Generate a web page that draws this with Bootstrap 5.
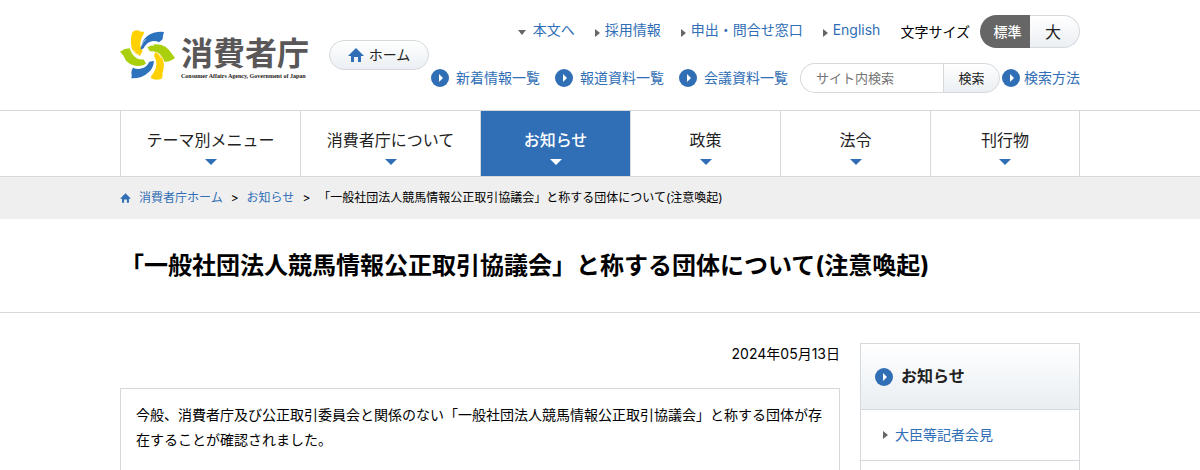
<!DOCTYPE html>
<html lang="ja">
<head>
  <meta charset="UTF-8">
  <meta name="viewport" content="width=device-width, initial-scale=1.0">
  <title>「一般社団法人競馬情報公正取引協議会」と称する団体について(注意喚起) | 消費者庁</title>
  <link rel="stylesheet" href="https://cdn.jsdelivr.net/npm/bootstrap@5.3.0/dist/css/bootstrap.min.css">
  <style>
    body {
      font-family: Inter, "Noto Sans CJK JP", sans-serif;
      font-size: 14px;
      line-height: 20px;
      color: #000;
    }

    a {
      color: #306eb5;
      text-decoration: none;
    }

    .site-width {
      width: 100%;
      max-width: 960px;
      margin: 0 auto;
    }

    /* header */
    .header-inner {
      min-height: 110px;
      padding: 15px 0;
    }

    .logo-link {
      gap: 6px;
      margin-top: 15px;
    }

    .logo-text {
      padding-top: 6px;
    }

    .logo-name {
      font-size: 32px;
      line-height: 36px;
      font-weight: 700;
      color: #595757;
    }

    .logo-en {
      font-family: "Liberation Serif", serif;
      font-size: 6px;
      line-height: 8px;
      font-weight: 700;
      color: #231815;
      white-space: nowrap;
    }

    .home-link {
      width: 100px;
      height: 30px;
      margin: 25px 0 0 20px;
      gap: 5px;
    }

    .pill {
      color: #222;
      border: 1px solid #d5d9dd;
      border-radius: 18px;
      background: linear-gradient(#fff, #ebeff3);
    }

    .header-tools {
      gap: 15px;
    }

    .tool-links {
      gap: 20px;
      padding: 0 20px 4px 0;
    }

    .size-label {
      margin-right: 10px;
    }

    .arrow-link {
      display: flex;
      align-items: center;
      gap: 5px;
    }

    .arrow-link::before {
      content: "";
      margin-top: 6px;
      border: 4px solid transparent;
      border-left: 5px solid #666;
      border-right: 0;
    }

    .arrow-down {
      gap: 7px;
    }

    .arrow-down::before {
      border: 4px solid transparent;
      border-top: 5px solid #666;
      border-bottom: 0;
    }

    .size-button {
      width: 50px;
      height: 33px;
      padding: 0;
    }

    .size-normal {
      padding-left: 5px;
      font-weight: 500;
      color: #fff;
      background: #666;
      border: 0;
      border-radius: 17px 0 0 17px;
    }

    .size-large {
      padding-right: 3px;
      font-size: 16px;
      border-left: 0;
      border-radius: 0 17px 17px 0;
    }

    .circle-link {
      display: flex;
      align-items: center;
      gap: 7px;
    }

    .list-links {
      gap: 15px;
      padding-right: 12px;
    }

    .search-text {
      width: 143px;
      height: 30px;
      padding: 0 15px;
      font-size: 13px;
      border: 1px solid #d5d9dd;
      border-right: 0;
      border-radius: 15px 0 0 15px;
    }

    .search-text::placeholder {
      color: #757575;
    }

    .search-button {
      width: 57px;
      height: 30px;
      padding: 0;
      font-size: 13px;
      border-radius: 0 15px 15px 0;
    }

    .search-help {
      gap: 4px;
      padding-left: 2px;
    }

    /* global navigation */
    .global-nav {
      border: solid #d5d9dd;
      border-width: 1px 0;
    }

    .global-nav li {
      width: 15.625%;
      border-left: 1px solid #d5d9dd;
    }

    .global-nav .wide-item {
      width: 18.75%;
    }

    .global-nav li:last-child {
      border-right: 1px solid #d5d9dd;
    }

    .global-nav a {
      display: flex;
      flex-direction: column;
      align-items: center;
      gap: 7px;
      height: 65px;
      padding-top: 17px;
      font-size: 16px;
      line-height: 24px;
      color: #222;
    }

    .global-nav a::after {
      content: "";
      border: 6px solid transparent;
      border-top-color: #306eb5;
      border-bottom: 0;
    }

    .global-nav .current {
      color: #fff;
      font-weight: 500;
      background: #306eb5;
    }

    .global-nav .current::after {
      border-top-color: #fff;
    }

    /* breadcrumb */
    .crumb-bar {
      background: #efefef;
      font-size: 12px;
    }

    .crumb-bar ol {
      gap: 8px;
      padding: 11px 0;
    }

    .page-title {
      border-bottom: 1px solid #d5d9dd;
    }

    .page-title h1 {
      padding: 29px 0 28px;
      font-size: 24px;
      line-height: 36px;
      font-weight: 700;
    }

    /* contents */
    .content-area {
      gap: 20px;
      padding-top: 30px;
    }

    .article-date {
      margin-bottom: 23px;
      line-height: 22px;
      text-align: right;
    }

    .article-box {
      padding: 13px 15px;
      line-height: 25px;
      border: 1px solid #d5d9dd;
      border-bottom: 0;
    }

    .side-menu {
      flex: 0 0 220px;
      border: 1px solid #d5d9dd;
      border-bottom: 0;
    }

    .side-menu h2 {
      gap: 8px;
      padding: 20px 14px;
      font-size: 16px;
      line-height: 25px;
      font-weight: 700;
      color: #222;
      border-bottom: 1px solid #d5d9dd;
      background: linear-gradient(#fff, #e9eef2);
    }

    .side-menu li {
      padding: 15px 22px;
      border-bottom: 1px solid #d5d9dd;
    }

    .side-menu .arrow-link {
      gap: 7px;
    }

    .side-menu .arrow-link::before {
      margin-top: 0;
    }
  </style>
</head>
<body class="vh-100 d-flex flex-column overflow-hidden">
  <svg class="d-none">
    <symbol id="icon-circle" viewBox="0 0 18 18">
      <circle cx="9" cy="9" r="9" fill="#306eb5"/>
      <path d="M8 5v8l4-4z" fill="#fff"/>
    </symbol>
    <symbol id="icon-home" viewBox="0 0 16 14">
      <path d="M8 0L0 8h3v6h3V9h4v5h3V8h3z" fill="#306eb5"/>
    </symbol>
  </svg>

  <header>
    <div class="site-width header-inner d-flex align-items-start">
      <a href="#" class="logo-link d-flex">
        <svg width="55" height="50" viewBox="30 46 165 150">
          <path d="M66 56Q72 44 84 47Q94 53 102 51Q103 58 97 65Q90 78 91 92Q92 102 98 108L90 124Q72 118 66 103Q59 80 66 56Z" fill="#ffd100"/>
          <path d="M30 111Q44 101 59 101Q65 120 78 129Q89 134 101 134L108 147Q96 156 75 153Q56 149 47 137Q44 124 30 111Z" fill="#a9cf0d"/>
          <path d="M132 139Q130 163 113 175Q96 192 64 191Q67 181 64 174Q65 164 69 159Q83 166 96 161Q111 156 118 141Z" fill="#2d72bd"/>
          <path d="M135 113Q157 119 160 140Q164 160 157 176Q160 187 153 193Q136 199 122 190Q123 182 129 177Q139 163 139 151Q141 136 132 124Z" fill="#ffd100"/>
          <path d="M195 130Q180 142 163 141Q158 122 144 114Q130 109 119 110L112 96Q132 84 154 91Q171 96 180 110Z" fill="#a9cf0d"/>
          <path d="M162 52Q158 64 158 73Q153 79 147 83Q133 75 119 82Q107 87 101 101L92 105Q93 79 112 64Q134 49 162 52Z" fill="#2d72bd"/>
          <path d="M93 95Q97 82 108 74M80 130Q90 135 102 133M135 144Q134 154 129 160M142 114Q150 120 153 130M113 96Q122 91 132 92M70 106Q76 118 88 122" fill="none" stroke="#fff" stroke-width="2"/>
        </svg>
        <span class="logo-text d-flex flex-column">
          <span class="logo-name">消費者庁</span>
          <span class="logo-en">Consumer Affairs Agency, Government of Japan</span>
        </span>
      </a>
      <a href="#" class="home-link pill d-flex align-items-center justify-content-center">
        <svg width="16" height="14"><use href="#icon-home"/></svg>ホーム
      </a>

      <div class="header-tools d-flex flex-column align-items-end ms-auto">
        <div class="d-flex align-items-center">
          <div class="tool-links d-flex">
            <a href="#contents" class="arrow-link arrow-down">本文へ</a>
            <a href="#" class="arrow-link">採用情報</a>
            <a href="#" class="arrow-link">申出・問合せ窓口</a>
            <a href="#" class="arrow-link">English</a>
          </div>
          <span class="size-label">文字サイズ</span>
          <button type="button" class="size-button size-normal">標準</button>
          <button type="button" class="size-button size-large pill">大</button>
        </div>
        <div class="d-flex align-items-center">
          <div class="list-links d-flex">
            <a href="#" class="circle-link"><svg width="18" height="18"><use href="#icon-circle"/></svg>新着情報一覧</a>
            <a href="#" class="circle-link"><svg width="18" height="18"><use href="#icon-circle"/></svg>報道資料一覧</a>
            <a href="#" class="circle-link"><svg width="18" height="18"><use href="#icon-circle"/></svg>会議資料一覧</a>
          </div>
          <form class="d-flex" role="search">
            <input type="text" class="search-text" placeholder="サイト内検索" aria-label="サイト内検索">
            <button type="button" class="search-button pill">検索</button>
          </form>
          <a href="#" class="circle-link search-help"><svg width="18" height="18"><use href="#icon-circle"/></svg>検索方法</a>
        </div>
      </div>
    </div>
  </header>

  <nav class="global-nav">
    <ul class="site-width d-flex list-unstyled">
      <li class="wide-item"><a href="#">テーマ別メニュー</a></li>
      <li class="wide-item"><a href="#">消費者庁について</a></li>
      <li><a href="#" class="current">お知らせ</a></li>
      <li><a href="#">政策</a></li>
      <li><a href="#">法令</a></li>
      <li><a href="#">刊行物</a></li>
    </ul>
  </nav>

  <nav class="crumb-bar" aria-label="パンくず">
    <ol class="site-width d-flex list-unstyled">
      <li><a href="#" class="d-flex align-items-center gap-2"><svg width="11" height="10"><use href="#icon-home"/></svg>消費者庁ホーム</a></li>
      <li>&gt;</li>
      <li><a href="#">お知らせ</a></li>
      <li>&gt;</li>
      <li>「一般社団法人競馬情報公正取引協議会」と称する団体について(注意喚起)</li>
    </ol>
  </nav>

  <div class="page-title">
    <h1 class="site-width">「一般社団法人競馬情報公正取引協議会」と称する団体について(注意喚起)</h1>
  </div>

  <div class="site-width content-area d-flex flex-grow-1" id="contents">
    <main class="d-flex flex-column flex-grow-1">
      <p class="article-date">2024年05月13日</p>
      <div class="article-box flex-grow-1">
        <p>今般、消費者庁及び公正取引委員会と関係のない「一般社団法人競馬情報公正取引協議会」と称する団体が存在することが確認されました。</p>
      </div>
    </main>
    <aside class="side-menu">
      <h2 class="d-flex align-items-center mb-0"><svg width="18" height="18"><use href="#icon-circle"/></svg>お知らせ</h2>
      <ul class="list-unstyled">
        <li><a href="#" class="arrow-link">大臣等記者会見</a></li>
      </ul>
    </aside>
  </div>

  <script src="https://cdn.jsdelivr.net/npm/bootstrap@5.3.0/dist/js/bootstrap.bundle.min.js"></script>
</body>
</html>
